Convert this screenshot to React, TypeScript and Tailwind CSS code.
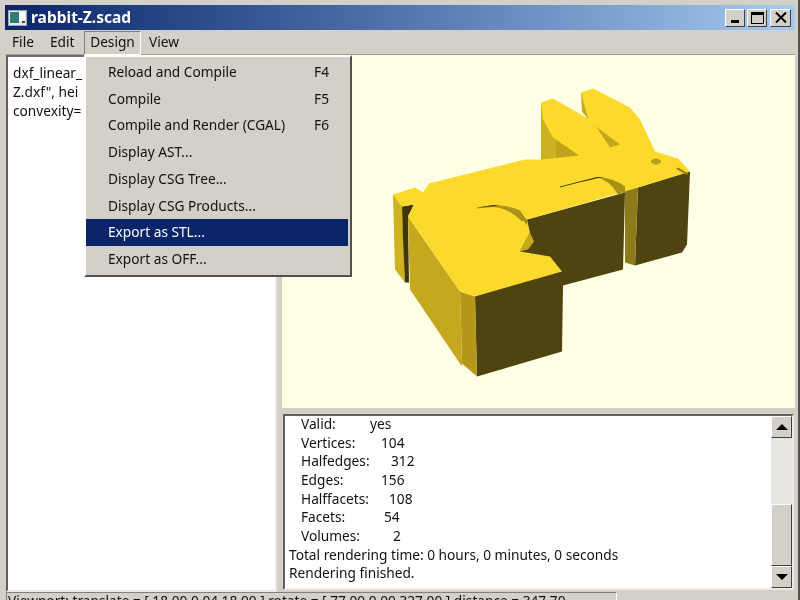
import React from 'react';

const menuItems = [
  { label: 'Reload and Compile', key: 'F4' },
  { label: 'Compile', key: 'F5' },
  { label: 'Compile and Render (CGAL)', key: 'F6' },
  { label: 'Display AST...', key: '' },
  { label: 'Display CSG Tree...', key: '' },
  { label: 'Display CSG Products...', key: '' },
  { label: 'Export as STL...', key: '', active: true },
  { label: 'Export as OFF...', key: '' },
];

const stats = [
  { label: 'Valid:', value: 'yes', width: 'w-[69px]' },
  { label: 'Vertices:', value: '104', width: 'w-[80px]' },
  { label: 'Halfedges:', value: '312', width: 'w-[90px]' },
  { label: 'Edges:', value: '156', width: 'w-[80px]' },
  { label: 'Halffacets:', value: '108', width: 'w-[88px]' },
  { label: 'Facets:', value: '54', width: 'w-[83px]' },
  { label: 'Volumes:', value: '2', width: 'w-[92px]' },
];

const bevel = 'border border-t-white border-l-white border-r-[#404040] border-b-[#404040] bg-[#d4d0c8]';

function Rabbit() {
  return (
    <svg viewBox="282 56 513 352" className="w-full h-full block">
      {/* back ear side */}
      <polygon points="581,93 582,112 590,122 592,105" fill="#c4a81e" />
      {/* front ear side */}
      <polygon points="541,103 560,110 584,158 541,162" fill="#bfa31c" />
      <polygon points="541,103 556,110 556,160 541,162" fill="#ccb020" />
      {/* head front and side */}
      <polygon points="638,188 690,172 687,245 682,253 635,266" fill="#4f4410" />
      <polygon points="625,185 638,188 635,266 625,263" fill="#8d7a1a" />
      {/* body front */}
      <polygon points="527,220 625,193 623,270 563,286 562,352 477,377 475,297" fill="#4f4410" />
      {/* left sides */}
      <polygon points="393,195 402,207 405,283 395,270" fill="#cfb222" />
      <polygon points="402,207 414,205 408,217 409,283 405,283 403,240" fill="#3f360c" />
      <polygon points="408,217 460,292 462,367 410,290" fill="#c4a81e" />
      <polygon points="460,292 475,297 477,377 462,364" fill="#b4981a" />
      {/* top face */}
      <polygon
        points="393,195 415,188 423,193 429,184 525,160 541,160 579,156 553,138 543,120 541,103 553,99 588,119 581,93 593,89 630,108 640,120 655,152 678,159 690,172 638,188 625,192 527,220 530,233 520,252 550,257 562,272 475,297 460,292 408,217 414,205 402,207"
        fill="#fbda2c"
      />
      {/* haunch slits */}
      <path d="M625 193 L625 187 Q613 178 597 177.500 Q610 181 618 195 Z" fill="#a88f18" />
      <path d="M560 187 L597 177.500 L604 177.500 Q590 180 560 188 Z" fill="#3f360c" />
      <path d="M527 221 L527 226 L518 213 Q508 206 493 205.500 Q510 206 520 211 Z" fill="#a88f18" />
      <path d="M518 213 Q508 206 493 206 L477 208 L477 209 L493 207.500 Q508 208 522 222 L527 220 Z" fill="#a88f18" />
      <path d="M477 208 L493 205.500 L500 206 L490 207 Z" fill="#3f360c" />
      <polygon points="530,233 520,252 528,250 534,242" fill="#c4a81e" />
      {/* ear gap, eye, nose */}
      <polygon points="596,127 620,145 610,148" fill="#c4a81e" />
      <ellipse cx="656" cy="162" rx="5" ry="3" fill="#b89c1a" />
      <polygon points="676,169 678,168 688,174 687,176" fill="#8d7a1a" />
    </svg>
  );
}

export default function App() {
  return (
    <div
      className="relative flex flex-col w-[800px] h-[600px] overflow-hidden bg-[#d4d0c8] pt-[5px] pl-[5px] pr-[3px] border-r-2 border-r-[#505050] text-[13.7px] text-[#111] blur-[0.4px]"
      style={{ fontFamily: '"Noto Sans", sans-serif' }}
    >
      {/* title bar */}
      <div className="flex items-center h-[25px] shrink-0 bg-gradient-to-r from-[#0a246a] to-[#a6caf0] pl-[3px] pr-[4px]">
        <svg width="19" height="16" viewBox="0 0 19 16" className="shrink-0">
          <rect x="0.5" y="0.5" width="18" height="15" fill="#e8e8e8" stroke="#9aa" />
          <rect x="2" y="2" width="9" height="11" fill="#2f7d78" />
          <rect x="11" y="2" width="6" height="9" fill="#ffffff" />
          <rect x="14" y="11" width="3" height="2" fill="#445" />
        </svg>
        <span className="ml-[4px] text-[15.5px] font-bold text-white whitespace-nowrap">rabbit-Z.scad</span>
        <div className="ml-auto flex gap-[2px]">
          <div className={`w-[20px] h-[18px] flex items-end justify-center pb-[3px] ${bevel}`}>
            <div className="w-[8px] h-[3px] bg-black" />
          </div>
          <div className={`w-[20px] h-[18px] flex items-center justify-center mr-[1px] ${bevel}`}>
            <div className="w-[13px] h-[12px] border border-black border-t-[3px]" />
          </div>
          <div className={`w-[21px] h-[18px] flex items-center justify-center ${bevel}`}>
            <svg width="12" height="11" viewBox="0 0 12 11">
              <path d="M1 0.5 L11 10.5 M11 0.5 L1 10.5" stroke="#000" strokeWidth="2" />
            </svg>
          </div>
        </div>
      </div>

      {/* menu bar */}
      <div className="flex items-center h-[25px] shrink-0 border-b border-b-[#a0a0a0]">
        <span className="ml-[7px] w-[38px]">File</span>
        <span className="w-[34px]">Edit</span>
        <span className="h-[24px] w-[57px] flex items-center justify-center mt-[1px] border border-t-[#808080] border-l-[#808080] border-r-white border-b-white">Design</span>
        <span className="ml-[8px]">View</span>
      </div>

      {/* panes */}
      <div className="flex flex-1 min-h-0 pl-[1px] pb-[2px] gap-[5px]">
        <div className="w-[271px] h-[537px] shrink-0 overflow-hidden bg-white border-2 border-t-[#707070] border-l-[#606060] border-r-[#ece9e4] border-b-[#ece9e4] pl-[5px] pt-[6px] leading-[19px]">
          <div className="whitespace-nowrap">dxf_linear_</div>
          <div className="whitespace-nowrap">Z.dxf", hei</div>
          <div className="whitespace-nowrap">convexity=</div>
        </div>

        <div className="flex-1 min-w-0 flex flex-col">
          <div className="h-[353px] shrink-0 bg-[#ffffe5]">
            <Rabbit />
          </div>
          <div className="mt-[6px] ml-[1px] mr-[1px] h-[176px] flex overflow-hidden bg-white border-2 border-t-[#606060] border-l-[#606060] border-r-[#ece9e4] border-b-[#ece9e4]">
            <div className="flex-1 min-w-0 pl-[4px] leading-[18.65px] -mt-[1px] whitespace-nowrap">
              {stats.map((s) => (
                <div key={s.label} className="flex pl-[12px]">
                  <span className={`shrink-0 ${s.width}`}>{s.label}</span>
                  <span>{s.value}</span>
                </div>
              ))}
              <div>Total rendering time: 0 hours, 0 minutes, 0 seconds</div>
              <div>Rendering finished.</div>
            </div>
            <div className="w-[21px] shrink-0 flex flex-col bg-[#e8e6e1]">
              <div className={`h-[22px] shrink-0 flex items-center justify-center ${bevel}`}>
                <div className="w-0 h-0 border-x-[6px] border-x-transparent border-b-[6px] border-b-black" />
              </div>
              <div className="flex-1" />
              <div className={`h-[62px] shrink-0 ${bevel}`} />
              <div className={`h-[22px] shrink-0 flex items-center justify-center ${bevel}`}>
                <div className="w-0 h-0 border-x-[6px] border-x-transparent border-t-[6px] border-t-black" />
              </div>
            </div>
          </div>
        </div>
      </div>

      {/* status bar, cut by the window edge */}
      <div className="h-[8px] shrink-0 mr-[178px] ml-[1px] border-t border-l border-t-[#808080] border-l-[#808080] border-r border-r-white overflow-hidden pl-[1px] leading-[16px] whitespace-nowrap">
        Viewport: translate = [ 18.00 0.04 18.00 ]  rotate = [ 77.00 0.00 327.00 ]  distance = 347.70
      </div>

      {/* open Design menu */}
      <div className="absolute left-[84px] top-[55px] w-[268px] h-[222px] flex flex-col pt-[2px] border-2 border-t-white border-l-white border-r-[#505050] border-b-[#505050] bg-[#d4d0c8]">
        {menuItems.map((item) => (
          <div
            key={item.label}
            className={`flex items-center h-[26.7px] shrink-0 pl-[22px] mr-[2px] ${item.active ? 'bg-[#0a246a] text-white' : ''}`}
          >
            <span className="whitespace-nowrap">{item.label}</span>
            {item.key && <span className="ml-auto mr-[19px]">{item.key}</span>}
          </div>
        ))}
      </div>
    </div>
  );
}
